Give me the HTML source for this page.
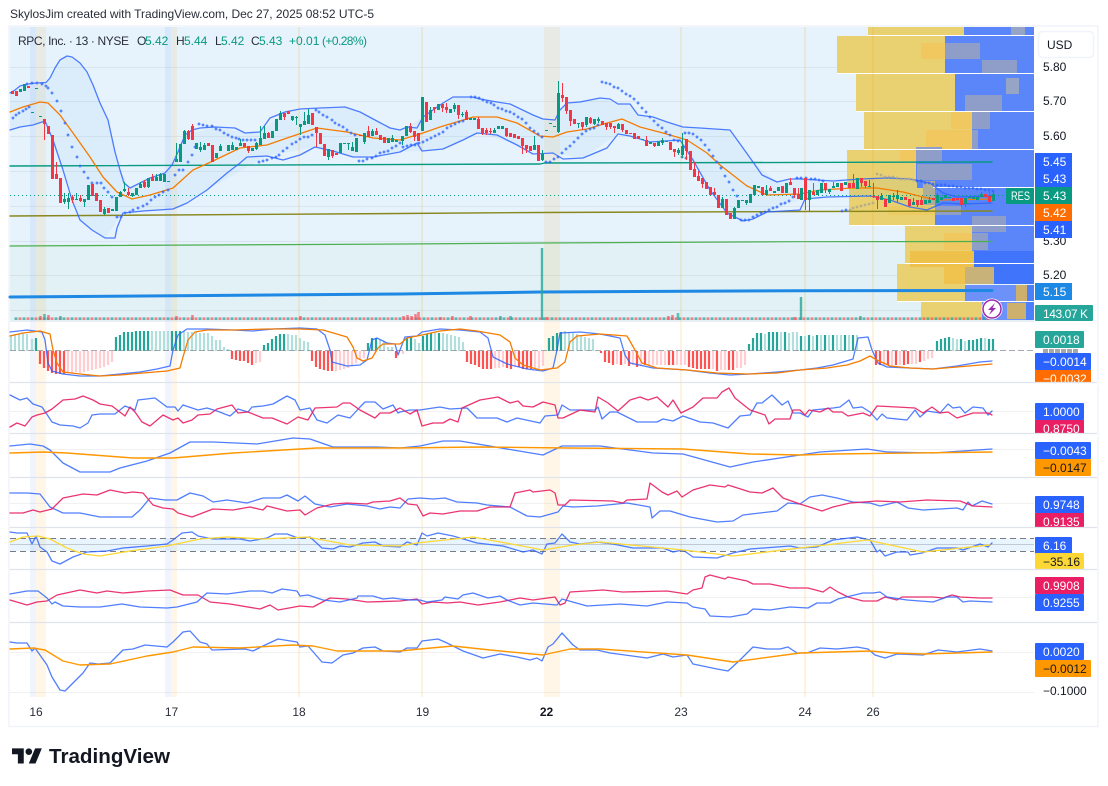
<!DOCTYPE html>
<html lang="en"><head><meta charset="utf-8"><title>RPC, Inc. chart</title>
<style>html,body{margin:0;padding:0;background:#fff}svg{display:block}text{font-family:"Liberation Sans",Arial,sans-serif;font-size:12px}.l{fill:none;stroke-linejoin:round;stroke-linecap:round}.b{stroke:#2962ff;stroke-width:1.3;opacity:.82}.p{stroke:#e91e63;stroke-width:1.3;opacity:.9}.o{stroke:#ff9800;stroke-width:1.4}.w{fill:#fff}.k{fill:#131722}.t{fill:#089981}</style></head><body>
<svg width="1108" height="786" viewBox="0 0 1108 786" xmlns="http://www.w3.org/2000/svg">
<defs>
<marker id="m" markerWidth="5" markerHeight="5" refX="2.5" refY="2.5" markerUnits="userSpaceOnUse"><path d="M1 2.5H4M2.5 1V4" stroke="#2962ff" stroke-width="1" fill="none"/></marker>
<marker id="n" markerWidth="5" markerHeight="5" refX="2.5" refY="2.5" markerUnits="userSpaceOnUse"><path d="M1 2.5H4M2.5 1V4" stroke="#a9a58c" stroke-width="1" fill="none"/></marker>
</defs>
<rect width="1108" height="786" fill="#fff"/>
<text x="10" y="18" fill="#2a2e39" textLength="364" lengthAdjust="spacing">SkylosJim created with TradingView.com, Dec 27, 2025 08:52 UTC-5</text>
<rect x="9" y="26" width="1089" height="700.5" fill="#fff" stroke="#f0f3fa" stroke-width="1.5"/>
<rect x="10" y="27" width="1024" height="217" fill="#e6f3fc"/>
<rect x="10" y="244" width="1024" height="77" fill="#e2f1f5"/>
<!-- grid -->
<path d="M10 67.5H1034M10 101.5H1034M10 136.5H1034M10 171.5H1034M10 206.5H1034M10 241.5H1034M10 275.5H1034M10 310.5H1034" stroke="#000" stroke-opacity=".055" fill="none"/>
<path d="M10 411.5H1034M10 449.5H1034M10 503.5H1034M10 597.5H1034M10 652.5H1034M10 692.5H1034" stroke="#000" stroke-opacity=".055" fill="none"/>
<!-- volume profile -->
<g>
<rect x="868" y="27" width="96" height="8" fill="#e9d171"/><rect x="964" y="27" width="70" height="8" fill="#5b86fa"/><rect x="1011" y="27" width="14" height="8" fill="#96a4c6"/>
<rect x="837" y="36" width="108" height="37" fill="#e9d171"/><rect x="945" y="36" width="89" height="37" fill="#5b86fa"/><rect x="921" y="43" width="24" height="16" fill="#f0c85f"/><rect x="945" y="43" width="35" height="16" fill="#8e9ec8"/><rect x="982" y="60" width="35" height="13" fill="#8e9ec8"/>
<rect x="856" y="74" width="99" height="37" fill="#e9d171"/><rect x="955" y="74" width="79" height="37" fill="#5b86fa"/><rect x="1006" y="78" width="13" height="16" fill="#96a4c6"/><rect x="965" y="95" width="37" height="16" fill="#8e9ec8"/>
<rect x="864" y="112" width="108" height="37" fill="#e9d171"/><rect x="972" y="112" width="62" height="37" fill="#5b86fa"/><rect x="951" y="112" width="21" height="17" fill="#f0c85f"/><rect x="972" y="112" width="18" height="17" fill="#8e9ec8"/><rect x="926" y="130" width="46" height="19" fill="#f0c85f"/><rect x="972" y="130" width="6" height="19" fill="#8e9ec8"/>
<rect x="847" y="150" width="69" height="37" fill="#e9d171"/><rect x="916" y="150" width="118" height="37" fill="#5b86fa"/><rect x="900" y="150" width="16" height="11" fill="#f0c85f"/><rect x="916" y="147" width="26" height="14" fill="#8e9ec8"/><rect x="917" y="164" width="55" height="16" fill="#8e9ec8"/>
<rect x="849" y="188" width="86" height="37" fill="#e9d171"/><rect x="847" y="180" width="70" height="8" fill="#e9d171"/><rect x="935" y="188" width="99" height="37" fill="#5b86fa"/><rect x="917" y="180" width="18" height="8" fill="#5b86fa"/><rect x="923" y="181" width="12" height="24" fill="#b5af95"/><rect x="888" y="206" width="47" height="9" fill="#eccb63"/><rect x="935" y="206" width="26" height="9" fill="#8e9ec8"/>
<rect x="905" y="226" width="67" height="37" fill="#e9d171"/><rect x="972" y="226" width="62" height="37" fill="#5b86fa"/><rect x="972" y="216" width="34" height="16" fill="#8e9ec8"/><rect x="944" y="233" width="28" height="17" fill="#f0c85f"/><rect x="972" y="233" width="16" height="17" fill="#8e9ec8"/><rect x="974" y="251" width="60" height="17" fill="#3f74fb"/><rect x="910" y="251" width="64" height="16" fill="#eec14b"/>
<rect x="897" y="264" width="68" height="37" fill="#e9d171"/><rect x="910" y="264" width="64" height="3" fill="#eec14b"/><rect x="965" y="267" width="69" height="17" fill="#3f74fb"/><rect x="965" y="285" width="69" height="16" fill="#6c92fa"/><rect x="1024" y="285" width="10" height="16" fill="#4c7ffb"/><rect x="944" y="267" width="21" height="17" fill="#f0c34f"/><rect x="965" y="267" width="29" height="17" fill="#c9b27a"/><rect x="1016" y="285" width="11" height="17" fill="#cdb06e"/>
<rect x="921" y="302" width="61" height="18" fill="#e9d171"/><rect x="982" y="302" width="52" height="18" fill="#6c92fa"/><rect x="1026" y="302" width="8" height="18" fill="#4c7ffb"/><rect x="1007" y="303" width="19" height="16" fill="#cdb06e"/>
<path d="M868 35.5H1034M837 73.5H1034M856 111.5H1034M864 149.5H1034M933 187.5H1034M849 225.5H1034M905 263.5H1034M897 301.5H1034" stroke="#fff" stroke-width="1"/>
</g>
<!-- session bands -->
<g>
<rect x="30" y="27" width="6" height="670" fill="#2962ff" opacity=".07"/><rect x="36" y="27" width="10" height="670" fill="#ff9800" opacity=".09"/>
<rect x="165" y="27" width="6" height="670" fill="#2962ff" opacity=".07"/><rect x="171" y="27" width="6" height="670" fill="#ff9800" opacity=".09"/>
<rect x="298" y="27" width="2" height="670" fill="#ff9800" opacity=".13"/><rect x="421" y="27" width="2" height="670" fill="#ff9800" opacity=".13"/>
<rect x="544" y="27" width="16" height="670" fill="#ff9800" opacity=".09"/><rect x="680" y="27" width="2" height="670" fill="#ff9800" opacity=".13"/>
<rect x="804" y="27" width="2" height="670" fill="#ff9800" opacity=".13"/><rect x="872" y="27" width="2" height="670" fill="#ff9800" opacity=".13"/>
</g>
<!-- legend -->
<text x="18" y="45" fill="#2a2e39" textLength="111" lengthAdjust="spacing">RPC, Inc. · 13 · NYSE</text>
<text x="137" y="45" fill="#2a2e39">O</text><text x="145" y="45" class="t">5.42</text>
<text x="176" y="45" fill="#2a2e39">H</text><text x="184" y="45" class="t">5.44</text>
<text x="215" y="45" fill="#2a2e39">L</text><text x="221" y="45" class="t">5.42</text>
<text x="251" y="45" fill="#2a2e39">C</text><text x="259" y="45" class="t">5.43</text>
<text x="289" y="45" class="t">+0.01</text><text x="322" y="45" class="t" textLength="45" lengthAdjust="spacing">(+0.28%)</text>
<!-- Bollinger fill -->
<path d="M10 93L28 84 46 82.5 55 68 67 56 80 63 93 85 108 120 120 170 130 188 165 173 185 135 215 127 245 133 260 132 285 112 345 107 400 131 423 117 453 97 472 97 497 102 543 119 555 120 567 103 600 98 618 104 630 104 638 115 683 127 730 130 753 162 777 182 800 179 860 179 910 179 943 193 992 196 992 203 963 204 943 203 927 210 890 200 870 196 800 200 767 212 743 221 727 213 693 160 680 140 650 142 618 134 583 158 553 153 517 145 477 133 443 149 422 151 400 152 353 157 315 147 267 156 207 190 173 209 123 213 105 238 80 220 53 140 45 121 10 130Z" fill="#2196f3" fill-opacity=".055"/>
<!-- horizontal levels -->
<polyline class="l" stroke="#089981" stroke-width="1.4" points="10,166 540,164 545,163 992,162"/>
<polyline class="l" stroke="#88871e" stroke-width="1.4" points="10,216 400,213.5 540,212.5 800,211.5 992,211"/>
<polyline class="l" stroke="#4caf50" stroke-width="1.2" points="10,246 400,244 540,243 800,241.7 992,241.5"/>
<polyline class="l" stroke="#1e88e5" stroke-width="3" points="10,297 400,294 540,292 800,290.7 992,290.5"/>
<path d="M10 195.5H1006" stroke="#089981" stroke-width="1" stroke-dasharray="1 3" fill="none"/>
<!-- volume -->
<g transform="translate(.5 0)">
<path d="M14 318.7H992" stroke="#26a69a" stroke-opacity=".75" stroke-width="2.6" stroke-dasharray="3 5" fill="none"/>
<path d="M18 318.7H992" stroke="#f7525f" stroke-opacity=".7" stroke-width="2.6" stroke-dasharray="3 5" fill="none"/>
<path d="M403 320V316M407 320V315M411 320V316M415 320V314M418 320V312M440 320V317M452 320V316M470 320V316M40 320V316M48 320V315M176 320V316M192 320V315M300 320V316M546 320V317M668 320V316M672 320V315M794 320V317" stroke="#f7525f" stroke-opacity=".7" stroke-width="2.6" fill="none"/>
<path d="M541.5 320V248M800.5 320V297" stroke="#26a69a" stroke-opacity=".8" stroke-width="2.4" fill="none"/>
<path d="M677.5 320V313M44 320V314M60 320V316M500 320V316M510 320V316M860 320V316" stroke="#26a69a" stroke-opacity=".7" stroke-width="2.6" fill="none"/>
</g>
<!-- bollinger lines -->
<polyline class="l b" points="10,93 15,90 20,86 28,84 36,83 46,82.5 50,78 55,68 60,60 67,56 72,57 80,63 87,72 93,85 100,103 108,120 115,152 120,170 124,183 130,188 138,184 150,178 165,173 172,165 178,152 185,135 192,130 200,128 215,127 235,128 245,133 260,132 270,118 285,112 300,109 320,108 345,107 360,112 375,120 390,128 400,130 407,127 417,128 423,117 433,110 443,103 453,97 472,97 480,99 497,102 510,104 533,115 543,119 555,120 560,110 567,103 580,102 600,98 610,99 618,104 630,104 638,115 653,117 667,122 683,127 700,128 730,130 743,148 753,162 762,175 777,182 790,179 800,179 833,181 860,179 887,178 910,179 930,183 943,193 957,197 992,196"/>
<polyline class="l b" points="10,130 20,127 33,125 45,121 53,140 63,170 72,200 80,220 92,230 105,238 115,238 117,228 123,213 143,211 173,209 187,203 207,190 227,173 240,163 247,157 267,156 283,160 300,155 315,147 333,151 353,157 373,157 400,152 417,143 422,151 443,149 463,140 477,133 497,135 517,145 533,154 553,153 563,159 583,158 607,148 618,134 630,136 650,142 680,140 693,160 710,190 727,213 743,221 753,219 767,212 800,210 805,199 827,197 870,196 890,200 910,207 927,210 943,203 963,204 992,203"/>
<polyline class="l" stroke="#f57c00" stroke-width="1.3" points="10,112 23,107 40,102 48,103 60,115 73,133 90,157 103,177 117,192 132,199 150,195 173,188 193,170 213,161 240,148 267,145 287,138 317,128 347,132 373,138 400,140 420,134 440,127 473,117 497,117 517,123 540,136 553,137 567,132 587,129 607,123 622,119 640,127 663,133 687,140 707,153 720,165 747,186 767,195 800,194 820,190 853,188 877,188 903,192 923,197 937,200 992,199"/>
<!-- PSAR -->
<g fill="none" stroke="none" marker-start="url(#m)" marker-mid="url(#m)" marker-end="url(#m)">
<polyline points="13,118 16,115 19,113 23,111 26,109 29,107"/>
<polyline points="27,84 32,83 37,83 42,84 46,86 48,88 52,93 57,101 61,111 65,123 68,135 72,147 77,157 80,166 84,172 88,178 92,183 97,183 101,183 104,188 108,192 112,197"/>
<polyline points="117,217 121,217 125,213 130,212 133,210 138,208 143,206 147,204 151,200 155,197 159,195 163,192 168,190 175,175 179,170 183,170 188,162 192,155 195,147"/>
<polyline points="199,124 203,125 207,126 212,126 216,129 220,130 224,133 228,135 232,137 236,138 239,139 243,140 247,140 251,140 255,140"/>
<polyline points="259,162 263,161 267,160 272,158 276,157 279,155 283,151 287,148 292,144 296,142 300,139 304,137 308,137 312,135"/>
<polyline points="316,110 319,112 323,115 327,117 332,120 335,123 339,125 343,127 347,130 351,133 355,135"/>
<polyline points="359,161 363,161 367,159 372,158 376,156 380,153 384,152 388,151 392,148 396,146 400,143 403,147 407,146 411,145 415,145 419,143 423,142 427,140 431,138 435,136 439,134 443,132 447,128 451,126 455,124 459,122 463,121"/>
<polyline points="471,97 475,97 479,98 483,100 487,102 491,103 494,105 498,108 502,109 506,111 510,112 514,114 518,117 522,119 526,123 530,128 534,131 538,134 542,137"/>
<polyline points="546,162 550,162 554,159 558,157 562,153 566,149 570,146 574,142 578,138 582,134 586,131 590,129 594,128 598,125"/>
<polyline points="602,82 606,83 610,84 614,87 618,88 622,91 626,94 630,96 634,99 638,103 642,108 646,112 650,117 654,121 658,125 662,128 666,132 670,135 674,140 678,141"/>
<polyline points="682,157 686,158"/>
<polyline points="685,133 689,133 693,134 697,137 701,140 705,145 709,150 713,156 717,162 721,168 725,176 729,182 733,190 737,196"/>
<polyline points="741,220 745,220 749,220 753,217 757,215 761,213 765,212 769,210 773,208 777,207 781,204 785,203 789,201 793,197"/>
<polyline points="797,178 801,178 806,178 811,179 815,179 819,180 823,181"/>
<polyline points="842,211 846,210"/>
<polyline points="917,181 921,181 925,183 929,183 933,184 937,185 941,185 945,185 949,186 953,186 957,187 961,187 965,188 969,188 973,188 977,189 981,189 985,190 989,190 993,191"/>
</g>
<g fill="none" stroke="none" marker-start="url(#n)" marker-mid="url(#n)" marker-end="url(#n)">
<polyline points="850,210 853,208 857,207 861,206 865,205 869,204 873,203"/>
<polyline points="877,174 881,175 885,177 889,177 893,177 897,178 901,179 905,179 909,179 913,180"/>
</g>
<!-- candles -->
<g transform="translate(.5 0)" fill="none">
<path stroke="#089981" stroke-width="1" d="M64 193V204M68 193V209M76 193V200M84 199V207M104 207V215M120 191V197M124 182V192M132 193V197M140 182V188M148 178V188M156 174V181M160 173V181M176 143V162M184 130V144M200 142V152M204 143V150M220 144V151M232 142V150M240 139V146M256 142V150M260 126V145M264 126V139M280 111V120M292 116V121M296 116V125M300 124V135M304 112V125M308 109V124M328 149V160M348 143V150M352 142V151M364 133V144M372 129V136M392 135V142M402 136V145M430 107V120M454 103V112M462 112V117M494 128V133M534 136V150M542 150V161M558 81V133M578 123V128M586 117V127M594 119V125M598 117V123M618 123V129M658 141V146M662 138V145M678 148V155M682 133V158M722 197V208M734 207V219M746 200V205M758 186V188M766 185V195M809 190V211M829 189V194M833 182V188M869 180V187M881 193V200M893 193V200M897 190V202M913 198V205M929 197V203M937 193V203M965 198V207M981 192V197M993 190V201"/>
<path stroke="#f23645" stroke-width="1" d="M44 119V140M56 162V179M72 195V203M80 195V202M128 188V196M144 180V188M152 174V181M188 130V140M192 124V140M248 146V153M268 132V138M284 113V120M316 127V147M332 150V158M368 126V137M376 128V135M410 123V133M414 131V141M434 107V113M442 104V112M446 103V113M458 105V119M466 110V120M478 117V129M482 128V135M486 128V135M490 128V134M506 128V137M522 138V154M526 145V153M562 83V102M566 97V114M570 110V126M582 122V130M590 117V124M606 123V130M610 123V129M614 126V133M622 124V132M646 136V146M654 143V147M674 149V157M686 139V160M694 162V177M698 171V181M702 178V188M714 188V195M770 186V191M790 178V185M794 188V198M798 188V199M805 178V210M813 183V195M825 183V193M853 174V188M861 178V187M865 181V188M873 183V198M877 196V209M909 199V207M917 200V207M921 197V205M961 198V207M989 190V204"/>
<path stroke="#089981" stroke-width="3" d="M20 89V92M24 84V91M32 112V113M36 88V89M40 116V117M64 199V202M68 198V202M76 199V200M84 199V202M88 185V200M104 209V214M112 209V211M116 197V211M120 192V197M124 189V191M132 193V196M136 188V195M140 184V188M148 178V187M156 177V181M160 174V181M164 174V182M168 181V182M176 159V162M180 144V162M184 131V144M196 143V149M200 147V150M204 145V150M216 153V158M220 146V151M228 145V151M232 145V150M236 147V150M240 143V146M252 148V151M256 143V149M260 138V145M264 133V139M272 131V138M276 119V131M280 113V120M292 116V120M296 117V118M300 124V127M304 121V125M308 115V124M328 149V157M340 143V153M344 143V144M348 143V144M352 147V151M356 138V152M364 133V142M372 131V136M388 138V143M392 138V142M396 140V142M402 136V141M406 126V136M422 97V131M430 110V120M438 104V110M450 109V113M454 105V109M462 114V115M470 118V120M474 118V120M494 130V133M498 126V129M502 126V129M534 145V150M542 154V160M546 130V131M550 123V124M554 126V127M558 93V132M578 123V124M586 117V125M594 119V124M598 119V121M618 124V129M642 139V140M650 142V144M658 142V146M662 140V143M666 141V142M678 150V153M682 146V155M722 199V208M734 208V219M738 200V208M742 200V201M746 200V203M750 194V203M754 185V195M758 186V188M766 190V195M774 191V193M778 187V191M786 183V193M801 188V200M809 190V200M817 190V195M821 183V193M829 189V192M833 186V188M837 183V187M845 182V185M857 178V189M869 186V187M881 196V200M889 195V203M893 196V197M897 195V199M901 197V200M913 202V205M925 200V204M929 200V203M937 195V203M941 197V200M945 195V198M949 197V198M965 198V204M969 197V198M973 197V199M977 197V200M981 194V197M993 194V201"/>
<path stroke="#f23645" stroke-width="3" d="M12 91V94M16 91V96M28 86V88M44 119V124M48 126V134M52 135V179M56 174V179M60 178V203M72 197V200M80 198V201M92 184V196M96 193V201M100 200V212M108 208V213M128 192V195M144 182V187M152 177V181M188 131V139M192 126V140M208 143V146M212 145V162M244 143V147M248 146V151M268 133V138M284 113V117M288 111V114M312 113V125M316 127V133M320 133V144M324 144V156M332 150V156M336 153V155M360 135V136M368 131V137M376 131V135M380 135V140M384 137V143M410 126V132M414 131V137M418 133V141M426 102V122M434 107V109M442 104V108M446 107V110M458 105V115M466 112V120M478 119V129M482 128V133M486 130V133M490 131V132M506 128V136M510 133V137M514 134V138M518 136V139M522 138V146M526 145V149M530 146V151M538 145V161M562 95V98M566 97V111M570 110V121M574 119V124M582 122V127M590 118V123M602 121V125M606 123V127M610 123V127M614 126V128M622 124V130M626 130V134M630 133V134M634 133V139M638 136V139M646 140V146M654 143V146M670 142V150M674 149V152M686 139V151M690 151V170M694 169V177M698 176V181M702 178V184M706 182V189M710 187V195M714 192V195M718 195V208M726 199V215M730 213V219M762 187V195M770 188V191M782 186V193M790 182V185M794 188V195M798 194V199M805 178V200M813 192V195M825 183V190M841 183V191M849 183V188M853 183V188M861 178V183M865 181V186M873 196V197M877 196V200M885 199V207M905 197V200M909 199V206M917 200V205M921 200V205M933 198V200M953 198V201M957 198V200M961 198V205M985 194V197M989 196V202"/>
</g>
<rect x="1035" y="321" width="63" height="1" fill="#fff"/>
<!-- MACD histogram -->
<g fill="none" stroke-width="2.2">
<path stroke="#26a69a" d="M36 351V338M116 351V337M120 351V335M124 351V332M128 351V332M132 351V332M136 351V331M140 351V331M144 351V331M148 351V331M172 351V331M176 351V331M180 351V331M264 351V345M268 351V343M272 351V339M276 351V336M280 351V334M284 351V334M368 351V343M372 351V338M376 351V338M407 351V338M411 351V337M423 351V336M427 351V334M431 351V333M439 351V333M549 351V338M553 351V336M557 351V333M561 351V332M749 351V344M753 351V338M757 351V333M761 351V333M769 351V332M773 351V332M777 351V332M785 351V332M801 351V336M809 351V335M817 351V335M825 351V335M833 351V335M845 351V335M853 351V335M937 351V341M941 351V339M945 351V338M949 351V337M961 351V339M969 351V340M973 351V340M977 351V339M981 351V338M989 351V339M993 351V339"/>
<path stroke="#b2dfdb" d="M11 351V335M15 351V334M19 351V334M23 351V333M27 351V334M32 351V339M152 351V331M156 351V331M160 351V331M164 351V331M168 351V331M184 351V331M188 351V332M192 351V332M196 351V332M200 351V333M204 351V333M208 351V333M212 351V336M216 351V340M220 351V340M224 351V347M228 351V349M288 351V334M292 351V335M296 351V335M300 351V338M304 351V341M308 351V342M380 351V340M384 351V341M388 351V347M392 351V347M415 351V339M419 351V343M435 351V333M443 351V333M447 351V334M451 351V335M455 351V336M459 351V337M463 351V342M565 351V331M569 351V332M573 351V333M577 351V334M581 351V335M585 351V337M589 351V338M593 351V339M765 351V334M781 351V332M789 351V333M793 351V332M797 351V332M805 351V336M813 351V336M821 351V335M829 351V335M837 351V335M841 351V335M849 351V335M857 351V335M953 351V338M957 351V339M965 351V341M985 351V338"/>
<path stroke="#ff5252" d="M40 351V364M44 351V368M48 351V371M52 351V373M56 351V374M60 351V374M64 351V374M232 351V359M236 351V360M240 351V361M244 351V361M248 351V363M252 351V365M312 351V361M316 351V367M320 351V369M324 351V370M328 351V371M332 351V371M396 351V358M467 351V362M471 351V364M475 351V365M479 351V367M483 351V369M487 351V369M491 351V369M507 351V368M511 351V369M519 351V367M523 351V369M527 351V369M531 351V369M601 351V353M605 351V362M609 351V363M613 351V365M621 351V365M629 351V366M637 351V367M645 351V365M669 351V365M673 351V365M689 351V367M693 351V368M697 351V369M701 351V369M705 351V369M709 351V369M717 351V371M729 351V370M733 351V370M876 351V365M880 351V365M888 351V365M896 351V365M904 351V365M908 351V364M920 351V362"/>
<path stroke="#ffcdd2" d="M68 351V373M72 351V373M76 351V372M80 351V373M84 351V372M88 351V371M92 351V370M96 351V369M100 351V368M104 351V367M108 351V365M112 351V362M256 351V363M260 351V362M336 351V371M340 351V370M344 351V369M348 351V368M352 351V366M356 351V363M360 351V360M364 351V358M403 351V354M495 351V368M499 351V368M503 351V367M515 351V367M535 351V369M539 351V370M543 351V366M617 351V364M625 351V364M633 351V365M641 351V366M649 351V365M653 351V365M657 351V365M661 351V365M665 351V365M677 351V365M681 351V365M685 351V365M713 351V369M721 351V370M725 351V370M737 351V368M741 351V368M745 351V365M884 351V365M892 351V366M900 351V365M912 351V364M916 351V364M924 351V361M928 351V359M932 351V358"/>
</g>
<path d="M10 350.5H1034" stroke="#8a8d96" stroke-opacity=".75" stroke-dasharray="6 3" fill="none"/>
<polyline class="l b" points="10,332 27,330 42,332 45,340 48,363 52,371 63,374 80,376 100,376 120,374 140,372 157,369 170,366 173,350 178,335 187,329 207,329 233,330 253,331 273,329 300,328 317,329 325,335 330,350 332,362 347,366 360,365 367,360 372,340 377,338 387,343 395,344 398,355 400,350 405,337 417,336 422,332 440,329 460,330 480,332 488,338 493,357 507,364 527,369 543,371 553,368 557,350 560,333 580,332 600,334 620,338 625,355 630,363 653,368 687,370 710,373 730,375 750,374 777,372 800,370 817,368 833,365 853,359 858,338 868,337 872,350 878,363 887,367 910,368 933,369 957,366 980,362 992,361"/>
<polyline class="l" stroke="#f57c00" stroke-width="1.3" points="10,336 23,333 40,331 50,334 53,350 57,363 63,372 80,374 100,376 120,375 143,373 167,371 180,368 183,357 188,340 195,332 207,330 233,330 267,329 300,329 323,330 347,337 353,347 357,358 363,361 372,358 378,348 383,344 400,344 407,338 422,335 440,331 460,329 477,331 500,335 510,342 515,358 523,365 540,370 557,368 565,362 570,342 577,336 600,334 627,336 635,350 642,363 657,368 687,370 717,373 747,374 777,373 800,370 827,368 847,365 860,361 870,356 877,360 890,366 910,368 933,369 957,367 992,364"/>
<!-- Pane 3 -->
<polyline class="l b" points="10,395 20,400 27,398 33,404 42,407 52,422 60,425 73,426 80,428 88,423 92,415 100,414 115,414 125,406 135,410 138,400 155,398 167,407 175,407 178,411 183,405 198,410 207,408 217,411 230,416 238,409 248,412 252,407 263,406 273,404 287,396 295,400 300,410 310,408 317,420 327,423 338,415 350,418 360,407 365,402 375,402 383,409 393,405 398,413 400,412 410,410 420,410 433,408 440,407 450,409 467,408 477,418 497,418 507,422 517,418 540,423 545,416 558,415 562,405 570,410 595,410 598,407 602,419 610,412 617,412 637,422 657,422 663,419 673,421 683,416 700,422 713,423 728,428 740,416 750,415 757,403 762,403 772,395 782,405 788,401 793,413 800,413 808,417 813,410 833,408 840,407 849,400 853,408 862,407 870,412 877,420 882,414 887,418 907,420 915,410 920,417 927,411 940,413 948,404 953,408 960,407 965,413 973,407 983,408 988,415 992,411"/>
<polyline class="l p" points="10,427 17,423 25,426 32,417 37,415 45,413 52,409 63,400 75,399 83,396 93,400 100,404 112,406 125,416 130,407 135,412 142,422 150,426 163,415 173,420 178,418 183,423 192,420 198,415 210,414 217,409 232,405 238,413 248,412 263,418 272,418 287,424 298,417 308,420 315,408 337,407 343,403 350,403 360,410 375,418 380,413 390,413 400,408 410,414 417,410 422,426 433,423 443,423 450,419 458,422 462,408 480,400 498,397 510,403 518,401 523,406 533,407 543,402 555,405 558,418 563,418 580,410 595,412 598,397 608,403 618,411 630,400 640,397 648,400 657,397 668,407 673,400 681,413 693,407 703,398 717,398 722,392 729,388 735,398 750,410 765,415 769,424 775,419 790,419 793,410 800,410 805,415 809,410 820,412 828,408 833,412 842,412 848,416 863,413 870,416 877,406 897,407 915,408 923,413 932,407 940,413 948,412 957,418 973,413 988,413 992,415"/>
<!-- Pane 4 -->
<polyline class="l b" points="10,446 30,444 43,446 50,450 63,463 80,472 110,472 120,468 147,461 170,453 190,442 213,442 257,444 293,438 310,439 333,447 377,447 400,448 420,446 443,441 460,441 513,450 543,455 562,446 600,446 653,453 683,454 730,467 753,462 800,455 820,452 867,449 887,452 933,453 992,449"/>
<polyline class="l o" points="10,453 43,452 67,453 133,458 173,458 233,453 317,448 400,448 480,447 567,448 683,449 750,454 800,455 833,454 992,452"/>
<!-- Pane 5 -->
<polyline class="l b" points="10,493 20,493 27,493 40,494 50,507 63,513 80,513 100,517 120,517 132,517 140,510 150,498 165,500 177,500 190,493 203,496 213,502 227,500 247,503 263,498 280,498 287,495 298,501 305,496 315,504 330,507 347,504 367,506 380,509 390,507 400,508 408,499 420,498 433,499 445,498 457,502 477,503 487,505 510,507 527,516 540,517 558,512 563,506 573,507 597,506 627,503 650,507 652,518 660,511 670,511 690,517 717,522 733,521 743,515 777,511 788,503 800,504 810,497 822,495 837,498 853,502 870,503 880,506 897,502 908,508 923,510 957,508 963,510 968,502 972,506 982,501 992,504"/>
<polyline class="l p" points="10,513 23,513 33,510 40,512 52,509 63,498 83,494 97,495 110,490 125,493 133,492 143,493 153,505 163,508 173,509 178,513 192,517 213,509 233,510 250,507 263,510 267,506 287,511 300,510 305,515 317,508 333,504 347,503 367,504 373,502 390,501 400,498 408,504 417,505 423,516 430,513 443,514 460,511 477,511 490,507 510,507 515,493 530,490 533,492 550,490 555,493 558,505 565,505 570,500 613,501 623,503 627,500 647,499 650,483 662,492 668,495 677,491 682,497 693,490 710,485 725,487 728,485 750,492 762,493 773,488 783,498 800,504 822,511 833,507 850,503 877,501 900,502 927,500 960,501 973,506 992,507"/>
<!-- Pane 6 -->
<rect x="10" y="538.5" width="1024" height="12.5" fill="#2196f3" opacity=".1"/>
<path d="M10 538.5H1034M10 551.5H1034" stroke="#787b86" stroke-dasharray="6 4" fill="none"/>
<path d="M10 544.5H1034" stroke="#787b86" stroke-opacity=".35" fill="none"/>
<polyline class="l b" points="10,532 17,533 27,533 32,544 36,536 40,547 47,552 52,561 60,564 73,557 87,552 107,551 123,548 147,546 167,544 173,540 182,533 192,532 198,536 213,539 240,539 250,541 267,538 275,534 287,534 298,538 310,537 322,548 333,549 340,546 350,547 363,543 375,542 383,546 400,547 407,542 417,545 422,533 427,536 438,533 453,536 477,543 503,546 523,552 533,550 542,554 547,544 555,543 562,534 570,542 580,544 597,542 613,544 633,548 663,548 673,552 683,550 693,557 717,558 733,553 750,549 790,546 800,548 817,547 833,540 857,537 870,540 877,552 880,550 885,556 897,552 908,552 910,555 922,553 937,548 957,548 963,550 980,544 988,547 992,543"/>
<polyline class="l" stroke="#fdd835" stroke-width="1.3" points="10,542 23,537 38,536 50,539 67,548 83,554 100,556 130,551 167,546 200,539 227,537 263,539 307,537 350,545 400,546 417,543 473,537 517,545 543,550 573,545 600,542 683,550 733,556 800,548 867,540 923,552 990,545"/>
<!-- Pane 7 -->
<polyline class="l p" points="10,600 27,605 37,602 47,601 57,595 80,590 97,593 107,591 123,593 147,591 170,590 183,595 198,595 210,602 230,604 260,609 270,605 278,610 300,606 313,607 330,598 347,599 367,602 400,601 417,599 422,604 433,602 447,603 460,602 478,605 500,602 520,598 533,600 555,597 560,605 565,603 570,592 603,590 623,592 667,591 687,594 693,590 702,588 705,577 710,575 725,579 728,577 747,581 753,584 770,584 790,588 808,588 823,592 830,587 838,592 848,597 863,601 877,601 885,597 897,600 902,597 933,597 943,598 952,595 960,597 980,598 992,598"/>
<polyline class="l b" points="10,594 27,591 38,591 47,598 52,604 55,602 63,606 80,607 100,607 122,604 140,607 167,608 177,607 197,602 207,593 227,594 250,591 263,591 272,593 282,589 297,591 300,596 308,595 323,600 340,602 357,598 358,596 373,596 383,599 393,598 400,599 410,600 420,600 427,602 442,600 445,597 458,599 463,595 473,593 488,598 500,596 507,600 520,605 533,603 557,605 562,599 587,606 620,604 647,606 667,602 687,603 693,607 705,609 710,616 730,617 747,614 753,609 770,610 790,607 808,608 817,603 830,603 838,599 863,593 873,593 880,592 887,597 907,600 933,602 947,597 957,597 963,602 970,601 992,602"/>
<!-- Pane 8 -->
<polyline class="l b" points="10,642 17,643 27,643 32,651 35,648 47,665 52,677 60,690 65,691 83,673 90,663 98,664 110,663 123,650 133,649 145,645 167,647 173,642 183,632 190,631 200,642 207,644 212,650 245,649 253,651 263,646 278,639 297,642 300,647 308,646 322,662 332,663 343,655 353,653 363,648 375,647 383,651 400,652 407,648 417,648 422,641 438,639 447,643 463,651 483,658 500,654 517,657 530,660 537,658 542,661 548,647 553,644 562,633 573,645 580,650 597,650 610,653 647,658 663,654 673,657 687,655 693,664 717,669 728,671 740,660 753,647 767,649 780,649 788,647 797,653 807,653 820,648 837,649 857,647 868,649 875,655 885,658 897,654 923,655 938,650 957,652 980,649 992,651"/>
<polyline class="l o" points="10,649 33,648 45,650 63,661 80,665 110,664 147,656 173,652 193,647 240,648 293,645 313,646 337,651 367,651 400,651 420,649 453,646 490,650 543,655 570,649 600,649 687,655 733,662 800,653 870,651 893,653 923,654 992,652"/>
<!-- axis labels -->
<text x="1043" y="71" class="k">5.80</text><text x="1043" y="105" class="k">5.70</text><text x="1043" y="140" class="k">5.60</text><text x="1043" y="245" class="k">5.30</text><text x="1043" y="279" class="k">5.20</text>
<!-- tags -->
<rect x="1035" y="153" width="37" height="34" fill="#2962ff"/><text x="1043" y="166" class="w">5.45</text><text x="1043" y="183" class="w">5.43</text>
<rect x="1006" y="188" width="28" height="16" rx="1" fill="#089981"/><text x="1011" y="200" class="w" textLength="19" lengthAdjust="spacingAndGlyphs">RES</text>
<rect x="1035" y="187" width="37" height="17" fill="#089981"/><text x="1043" y="200" class="w">5.43</text>
<rect x="1035" y="204" width="37" height="17" fill="#ff6d00"/><text x="1043" y="217" class="w">5.42</text>
<rect x="1035" y="221" width="37" height="17" fill="#2962ff"/><text x="1043" y="234" class="w">5.41</text>
<rect x="1035" y="283" width="37" height="17" fill="#1e88e5"/><text x="1043" y="296" class="w">5.15</text>
<rect x="1035" y="305" width="58" height="16" rx="1" fill="#26a69a"/><text x="1043" y="318" class="w" textLength="45" lengthAdjust="spacing">143.07 K</text>
<rect x="1038.5" y="31.5" width="55" height="26" rx="4" fill="#fff" stroke="#f0f3fa" stroke-width="1.5"/><text x="1047" y="49" class="k">USD</text>
<circle cx="992" cy="309" r="10.5" fill="#fff"/><circle cx="992" cy="309" r="9" fill="#fff" stroke="#9c27b0" stroke-width="1.5"/><path d="M995 303L988 310H991.5L989 315 996 308H992.5Z" fill="#9c27b0"/>
<!-- indicator tags -->
<path d="M1043 351H1079" stroke="#a5a7ad" stroke-width="4" stroke-dasharray="5 1" fill="none"/>
<rect x="1035" y="331" width="49" height="17" rx="1" fill="#26a69a"/><text x="1043" y="344" class="w">0.0018</text>
<rect x="1035" y="353" width="56" height="17" rx="1" fill="#2962ff"/><text x="1043" y="366" class="w">−0.0014</text>
<rect x="1035" y="370" width="56" height="12" fill="#ff6d00"/><text x="1043" y="383" class="w">−0.0032</text>
<rect x="1035" y="382" width="63" height="4" fill="#fff"/>
<rect x="1035" y="403" width="49" height="17" rx="1" fill="#2962ff"/><text x="1043" y="416" class="w">1.0000</text>
<rect x="1035" y="420" width="49" height="13" fill="#e91e63"/><text x="1043" y="433" class="w">0.8750</text>
<rect x="1035" y="433" width="63" height="4" fill="#fff"/>
<rect x="1035" y="442" width="56" height="17" rx="1" fill="#2962ff"/><text x="1043" y="455" class="w">−0.0043</text>
<rect x="1035" y="459" width="56" height="17" rx="1" fill="#ff9800"/><text x="1043" y="472" class="k">−0.0147</text>
<rect x="1035" y="496" width="49" height="17" rx="1" fill="#2962ff"/><text x="1043" y="509" class="w">0.9748</text>
<rect x="1035" y="513" width="49" height="14" fill="#e91e63"/><text x="1043" y="526" class="w">0.9135</text>
<rect x="1035" y="537" width="37" height="17" rx="1" fill="#2962ff"/><text x="1043" y="550" class="w">6.16</text>
<rect x="1035" y="553" width="49" height="16" rx="1" fill="#fdd835"/><text x="1043" y="566" class="k">−35.16</text>
<rect x="1035" y="577" width="49" height="17" rx="1" fill="#e91e63"/><text x="1043" y="590" class="w">0.9908</text>
<rect x="1035" y="594" width="49" height="17" rx="1" fill="#2962ff"/><text x="1043" y="607" class="w">0.9255</text>
<rect x="1035" y="643" width="49" height="17" rx="1" fill="#2962ff"/><text x="1043" y="656" class="w">0.0020</text>
<rect x="1035" y="660" width="56" height="17" rx="1" fill="#ff9800"/><text x="1043" y="673" class="k">−0.0012</text>
<text x="1043" y="695" class="k">−0.1000</text>
<path d="M10 321.5H1034" stroke="#e0e3eb" stroke-opacity=".6"/>
<path d="M10 382.5H1097M10 433.5H1097M10 477.5H1097M10 527.5H1097M10 569.5H1097M10 622.5H1097" stroke="#e0e3eb" stroke-width="1.3"/>
<!-- time labels -->
<g text-anchor="middle"><text x="36" y="716" fill="#2a2e39">16</text><text x="171.5" y="716" fill="#2a2e39">17</text><text x="299" y="716" fill="#2a2e39">18</text><text x="422.5" y="716" fill="#2a2e39">19</text><text x="546.5" y="716" fill="#131722" font-weight="700">22</text><text x="681" y="716" fill="#2a2e39">23</text><text x="805" y="716" fill="#2a2e39">24</text><text x="873" y="716" fill="#2a2e39">26</text></g>
<!-- logo -->
<g fill="#131722"><path transform="translate(12 745) scale(.84)" d="M14 22H7V11H0V4h14v18zM28 22h-8l7.5-18h8L28 22z"/><circle cx="28.8" cy="751.7" r="3.3"/></g>
<text x="49" y="763" fill="#131722" font-weight="700" textLength="121" lengthAdjust="spacingAndGlyphs" style="font-size:20.5px">TradingView</text>
</svg>
</body></html>
